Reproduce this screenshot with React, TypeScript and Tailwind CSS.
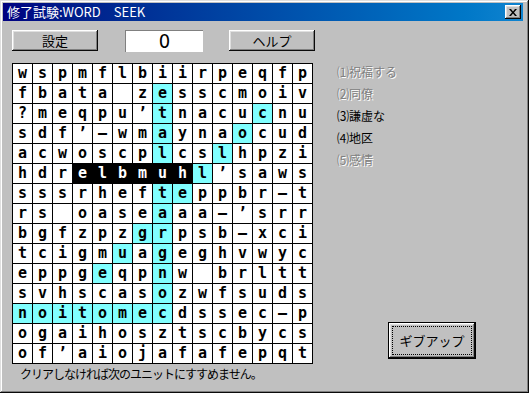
import React from 'react';

const rows = [
  'wspmflbiirpeqfp',
  'fbata zesscmoiv',
  "?meqpu'tnacucnu",
  "sdf'-wmaynaocud",
  'acwoscplcslhpzi',
  "hdrelbmuhl'saws",
  'sssrhefteppbr-t',
  "rs oaseaaa-'srr",
  'bgfzpzgrpsb-xci',
  'tcigmuageghvwyc',
  'eppgeqpnw brltt',
  'svhscasozwfsuds',
  'noitomecdssec-p',
  'ogaihosztscbycs',
  "of'aiojafafepqt",
];

// found words (cyan) and the current selection (black)
const found = new Set<string>();
for (let r = 1; r <= 12; r++) found.add(`${r},7`);
[[2, 12], [3, 11], [4, 10], [5, 9], [6, 8], [7, 7], [8, 6], [9, 5], [10, 4]].forEach(([r, c]) =>
  found.add(`${r},${c}`)
);
for (let c = 0; c <= 7; c++) found.add(`12,${c}`);
const selected = new Set<string>();
for (let c = 3; c <= 8; c++) selected.add(`5,${c}`);

const words = [
  { label: '⑴祝福する', done: true },
  { label: '⑵同僚', done: true },
  { label: '⑶謙虚な', done: false },
  { label: '⑷地区', done: false },
  { label: '⑸感情', done: true },
];

const jp = 'font-["Noto_Sans_CJK_JP","Noto_Sans",sans-serif]';
const bevel =
  'bg-[#c0c0c0] shadow-[inset_-1px_-1px_0_#0a0a0a,inset_1px_1px_0_#ffffff,inset_-2px_-2px_0_#808080,inset_2px_2px_0_#dfdfdf]';

function glyph(ch: string) {
  if (ch === "'") return '’';
  if (ch === '-') return '—';
  return ch;
}

export default function App() {
  return (
    <div
      className={`w-[529px] h-[393px] bg-[#c0c0c0] flex flex-col shadow-[inset_-1px_-1px_0_#0a0a0a,inset_1px_1px_0_#dfdfdf,inset_-2px_-2px_0_#808080,inset_2px_2px_0_#ffffff] ${jp}`}
    >
      {/* Title bar */}
      <div className="mt-[3px] ml-[3px] mr-[6px] h-[18px] bg-linear-to-r from-[#000080] to-[#1084d0] flex items-center pl-[4px] pr-[2px]">
        <span className="text-white text-[13px] leading-[18px]">修了試験:WORD　SEEK</span>
        <button className={`ml-auto w-[16px] h-[14px] flex items-center justify-center ${bevel}`}>
          <svg width="8" height="7" viewBox="0 0 8 7">
            <path d="M0 0h2l2 2.5L6 0h2L5 3.5 8 7H6L4 4.5 2 7H0l3-3.5z" fill="#000" />
          </svg>
        </button>
      </div>

      {/* Toolbar */}
      <div className="mt-[9px] pl-[12px] flex items-start">
        <button className={`w-[86px] h-[21px] text-[13px] text-black ${bevel}`}>設定</button>
        <div className="ml-[27px] w-[78px] h-[22px] bg-white shadow-[inset_1px_1px_0_#808080] flex items-center justify-center">
          <span className='font-["DejaVu_Sans",sans-serif] text-[20px] leading-none text-black scale-x-90'>0</span>
        </div>
        <button className={`ml-[26px] w-[86px] h-[21px] text-[13px] text-black ${bevel}`}>ヘルプ</button>
      </div>

      {/* Board + word list */}
      <div className="mt-[11px] pl-[12px] flex">
        <div className="grid grid-cols-[repeat(15,19px)] gap-px bg-black p-px w-[301px]">
          {rows.map((row, r) =>
            row.split('').map((ch, c) => {
              const key = `${r},${c}`;
              const tone = selected.has(key)
                ? 'bg-black text-white'
                : found.has(key)
                  ? 'bg-[#80ffff] text-black'
                  : 'bg-white text-black';
              return (
                <div
                  key={key}
                  className={`h-[19px] flex items-center justify-center font-["DejaVu_Sans_Mono",monospace] font-bold text-[15px] leading-none ${tone}`}
                >
                  {ch === ' ' ? '' : glyph(ch)}
                </div>
              );
            })
          )}
        </div>

        <div className="ml-[24px] flex flex-col justify-between">
          <div className="mt-[-2px] flex flex-col">
            {words.map((w) => (
              <div
                key={w.label}
                className={`h-[22px] flex items-center text-[12px] ${
                  w.done ? 'text-[#808080] [text-shadow:1px_1px_0_#ffffff]' : 'text-black'
                }`}
              >
                {w.label}
              </div>
            ))}
          </div>
          <button className="ml-[51px] mb-[5px] w-[88px] h-[37px] border border-black bg-[#c0c0c0]">
            <div className={`w-full h-full p-[3px] ${bevel}`}>
              <div className="w-full h-full border border-dotted border-black flex items-center justify-center text-[13px] text-black">
                ギブアップ
              </div>
            </div>
          </button>
        </div>
      </div>

      {/* Status */}
      <div className="mt-[2px] pl-[20px] text-[12px] leading-[16px] tracking-[-1px] text-black">
        クリアしなければ次のユニットにすすめません。
      </div>
    </div>
  );
}
